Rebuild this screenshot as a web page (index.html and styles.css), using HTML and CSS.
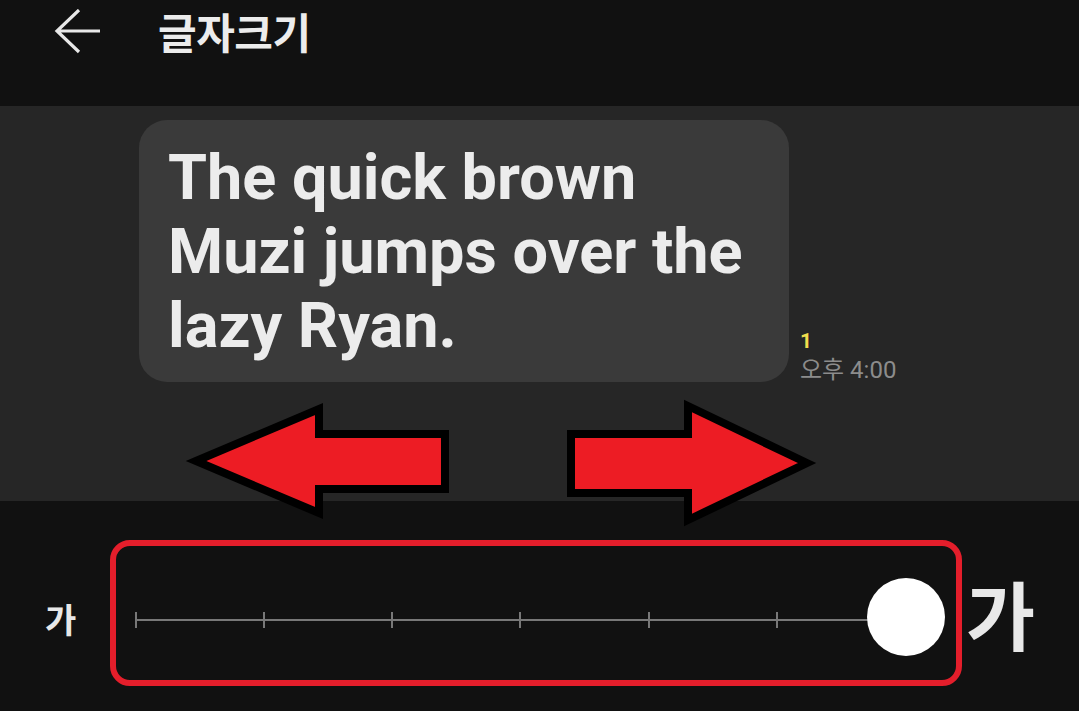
FILE: index.html
```html
<!DOCTYPE html>
<html lang="ko">
<head>
<meta charset="utf-8">
<title>글자크기</title>
<link rel="stylesheet" href="styles.css">
</head>
<body>
<div class="app">
  <header class="topbar">
    <svg class="back" width="48" height="48" viewBox="0 0 48 48" aria-hidden="true">
      <path d="M3 22 H46 M25 1 L3 22 L25 43" fill="none" stroke="#e8e8e8" stroke-width="3.2"/>
    </svg>
    <h1 class="title">글자크기</h1>
  </header>

  <section class="preview">
    <div class="msg-row">
      <div class="bubble">The quick brown<br>Muzi jumps over the<br>lazy Ryan.</div>
      <div class="meta">
        <span class="unread">1</span>
        <span class="time">오후 4:00</span>
      </div>
    </div>
    <svg class="arrows" width="1079" height="140" viewBox="0 395 1079 140" aria-hidden="true">
      <polygon points="196,461 319,409 319,434 445,434 445,489 319,489 319,513" fill="#ed1c24" stroke="#000" stroke-width="8" stroke-linejoin="miter"/>
      <polygon points="807,463 688,406 688,434 571,434 571,493 688,493 688,520" fill="#ed1c24" stroke="#000" stroke-width="8" stroke-linejoin="miter"/>
    </svg>
  </section>

  <section class="controls">
    <span class="small-ga">가</span>
    <div class="slider-box">
      <div class="slider">
        <div class="track"></div>
        <div class="ticks">
          <i></i><i></i><i></i><i></i><i></i><i></i><i></i>
        </div>
        <div class="knob"></div>
      </div>
    </div>
    <span class="big-ga">가</span>
  </section>
</div>
</body>
</html>
```

FILE: styles.css
```css
html, body {
  margin: 0;
  padding: 0;
  background: #111111;
}
body {
  font-family: Roboto, "Noto Sans CJK KR", "Noto Sans", sans-serif;
  color: #e8e8e8;
  width: 1079px;
  height: 711px;
  overflow: hidden;
}
.app {
  display: flex;
  flex-direction: column;
  height: 711px;
}
.topbar {
  height: 106px;
  display: flex;
  align-items: flex-start;
  background: #111111;
}
.back {
  margin: 9px 0 0 54px;
  flex: none;
}
.title {
  margin: 2px 0 0 56px;
  font-family: "Noto Sans CJK KR", sans-serif;
  font-weight: 700;
  font-size: 42px;
  line-height: 58px;
  color: #ececec;
  letter-spacing: -0.5px;
}
.preview {
  position: relative;
  height: 395px;
  background: #262626;
}
.msg-row {
  display: flex;
  align-items: flex-end;
  padding: 14px 0 0 139px;
}
.bubble {
  box-sizing: border-box;
  width: 650px;
  height: 262px;
  padding: 21px 20px 18px 29px;
  background: #3a3a3a;
  border-radius: 28px;
  font-family: Roboto, sans-serif;
  font-weight: 700;
  font-size: 63px;
  line-height: 74px;
  color: #ececec;
  white-space: nowrap;
}
.meta {
  display: flex;
  flex-direction: column;
  margin: 0 0 -4px 11px;
}
.unread {
  font-family: Roboto, sans-serif;
  font-weight: 700;
  font-size: 21px;
  line-height: 26px;
  color: #f0de4e;
}
.time {
  font-family: Roboto, "Noto Sans CJK KR", sans-serif;
  font-size: 24px;
  line-height: 32px;
  color: #8c8c8c;
}
.arrows {
  position: absolute;
  left: 0;
  top: 289px;
}
.controls {
  flex: 1;
  display: flex;
  align-items: center;
  padding: 14px 0 0 45px;
  background: #111111;
}
.small-ga {
  font-family: "Noto Sans CJK KR", sans-serif;
  font-weight: 700;
  font-size: 34px;
  line-height: 40px;
  width: 30px;
  margin-top: 12px;
  color: #e8e8e8;
}
.slider-box {
  box-sizing: border-box;
  width: 852px;
  height: 146px;
  margin: 0 0 0 35px;
  border: 6px solid #e41e2b;
  border-radius: 20px;
  padding: 0 0 0 19px;
  display: flex;
  align-items: center;
}
.slider {
  position: relative;
  width: 771px;
  height: 20px;
  margin-top: 14px;
}
.track {
  position: absolute;
  left: 0;
  right: 0;
  top: 9px;
  height: 2px;
  background: #787878;
}
.ticks {
  display: flex;
  justify-content: space-between;
  height: 20px;
  align-items: center;
}
.ticks i {
  display: block;
  width: 2px;
  height: 16px;
  background: #787878;
}
.knob {
  position: absolute;
  right: -39px;
  top: -32px;
  width: 78px;
  height: 78px;
  border-radius: 50%;
  background: #ffffff;
}
.big-ga {
  font-family: "Noto Sans CJK KR", sans-serif;
  font-weight: 700;
  font-size: 75px;
  line-height: 80px;
  margin: 0 0 0 4px;
  color: #e8e8e8;
}
```
